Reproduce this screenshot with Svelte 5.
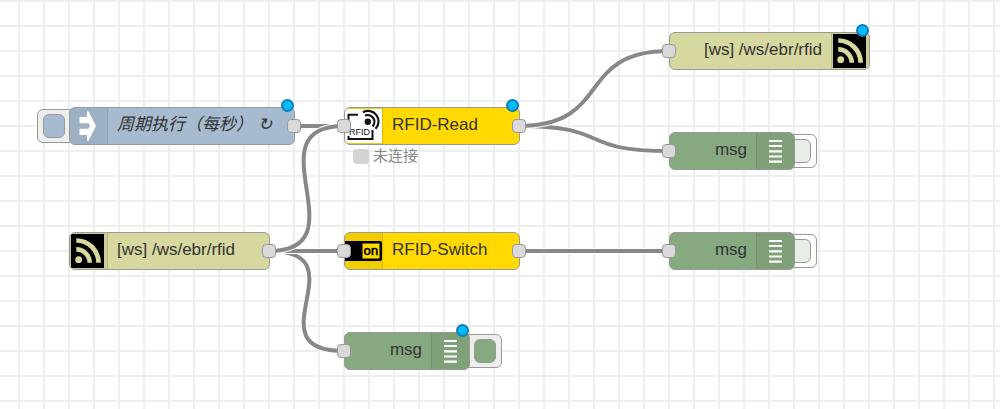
<script>
  const nodes = [
    { id: 'inject', type: 'inject', x: 69, y: 107, w: 226, label: '周期执行（每秒） ↻', icon: 'inject', out: true, changed: true, button: 'left' },
    { id: 'read', type: 'rfid', x: 344, y: 107, w: 176, label: 'RFID-Read', icon: 'tag', in: true, out: true, changed: true, status: '未连接' },
    { id: 'wsout', type: 'socket', x: 669, y: 32, w: 201, label: '[ws] /ws/ebr/rfid', icon: 'feed', end: true, in: true, changed: true },
    { id: 'debug1', type: 'debug', x: 669, y: 132, w: 126, label: 'msg', icon: 'list', end: true, in: true, button: 'off' },
    { id: 'wsin', type: 'socket', x: 69, y: 232, w: 201, label: '[ws] /ws/ebr/rfid', icon: 'feed', out: true },
    { id: 'switch', type: 'rfid', x: 344, y: 232, w: 176, label: 'RFID-Switch', icon: 'switch', in: true, out: true },
    { id: 'debug2', type: 'debug', x: 669, y: 232, w: 126, label: 'msg', icon: 'list', end: true, in: true, button: 'off' },
    { id: 'debug3', type: 'debug', x: 344, y: 332, w: 126, label: 'msg', icon: 'list', end: true, in: true, changed: true, button: 'on' }
  ];

  const links = [
    ['inject', 'read'],
    ['wsin', 'debug3'],
    ['wsin', 'switch'],
    ['wsin', 'read'],
    ['read', 'debug1'],
    ['read', 'wsout'],
    ['switch', 'debug2']
  ];

  const find = (id) => nodes.find((n) => n.id === id);

  function wire([from, to]) {
    const a = find(from);
    const b = find(to);
    const x1 = a.x + a.w - 1;
    const y1 = a.y + 19;
    const x2 = b.x;
    const y2 = b.y + 19;
    const bend = Math.round(Math.min(125, Math.hypot(x2 - x1, y2 - y1)) * 0.75);
    return `M${x1} ${y1}C${x1 + bend} ${y1} ${x2 - bend} ${y2} ${x2} ${y2}`;
  }
</script>

<main class="canvas">
  <svg class="wires" aria-hidden="true">
    {#each links as link}
      <path class="halo" d={wire(link)} />
      <path class="wire" d={wire(link)} />
    {/each}
  </svg>

  {#each nodes as node (node.id)}
    <section class="node {node.type}" style="left:{node.x}px;top:{node.y}px;width:{node.w}px">
      {#if node.button}
        <button class="action {node.button}" aria-label="{node.label} {node.button === 'left' ? 'inject' : 'toggle'}"><span></span></button>
      {/if}
      <div class="body" class:end={node.end}>
        <div class="icon">
          {#if node.icon === 'inject'}
            <svg width="37" height="36" viewBox="0 0 37 36">
              <path fill="#fff" d="M9.500 9h7.500V3.300h1.500L26 18l-7.500 14.700H17V27H9.500V20.700H18.500l1.500-2.700-1.500-2.700H9.500z" />
            </svg>
          {:else if node.icon === 'feed'}
            <svg width="37" height="36" viewBox="0 0 37 36">
              <path fill="#000" d="M1 1h33v34H1z" />
              <circle cx="8.700" cy="26.700" r="3.400" fill="#d8d8a0" />
              <path fill="none" stroke="#d8d8a0" stroke-width="4.700" d="M6.300 16.400a13.400 13.400 0 0 1 13.400 13.400M6.300 7.500a22.300 22.300 0 0 1 22.300 22.300" />
            </svg>
          {:else if node.icon === 'list'}
            <svg width="37" height="36" viewBox="0 0 37 36">
              <path fill="none" stroke="#fff" stroke-width="2.200" d="M12 8h13M12 13h13M12 18.300h13M12 23.500h13M12 28.700h13" />
            </svg>
          {:else if node.icon === 'tag'}
            <svg width="37" height="36" viewBox="0 0 37 36">
              <path fill="#fff" d="M0 1h37v34H0z" />
              <path fill="none" stroke="#111" stroke-width="2" d="M13 6.700H3.500V19M3.500 28v3h24V22" />
              <circle cx="22.800" cy="13.700" r="3.200" fill="#111" />
              <path fill="none" stroke="#111" stroke-width="2.200" d="M20 7.600a6.700 6.700 0 0 1 7.500 10.800M18 4.200a10.500 10.500 0 0 1 12.500 16.600" />
              <text x="4" y="27" class="tag-text">RFID</text>
            </svg>
          {:else}
            <svg width="37" height="36" viewBox="0 0 37 36">
              <rect x="-2" y="8" width="39" height="20" rx="2" fill="#000" />
              <path fill="#ffd900" d="M17.500 10.500h17v15h-17z" />
              <text x="18.500" y="22" class="on-text">on</text>
            </svg>
          {/if}
        </div>
        <span class="label">{node.label}</span>
      </div>
      {#if node.in}<i class="port in"></i>{/if}
      {#if node.out}<i class="port out"></i>{/if}
      {#if node.changed}<i class="changed"></i>{/if}
      {#if node.status}
        <div class="status"><i></i>{node.status}</div>
      {/if}
    </section>
  {/each}
</main>

<style>
  :global(body) {
    margin: 0;
  }
  .canvas {
    position: relative;
    min-height: 100vh;
    overflow: hidden;
    background-color: #fff;
    background-image: linear-gradient(#eee 2px, transparent 2px), linear-gradient(90deg, #eee 2px, transparent 2px);
    background-size: 25px 25px;
    background-position: 18px 0;
    font-family: 'Liberation Sans', 'Noto Sans CJK SC', sans-serif;
    color: #333;
  }
  .wires {
    position: absolute;
    inset: 0;
    width: 100%;
    height: 100%;
  }
  .halo,
  .wire {
    fill: none;
    stroke: #fff;
    stroke-width: 6px;
  }
  .wire {
    stroke: #888;
    stroke-width: 4px;
  }
  .node {
    position: absolute;
  }
  .body {
    position: relative;
    box-sizing: border-box;
    display: flex;
    align-items: center;
    gap: 9px;
    height: 38px;
    overflow: hidden;
    border: 1px solid #999;
    border-radius: 6px;
  }
  .end {
    flex-direction: row-reverse;
  }
  .inject .body {
    background: #a6bbcf;
  }
  .rfid .body {
    background: #ffd900;
  }
  .socket .body {
    background: #d7d7a0;
  }
  .debug .body {
    background: #87a980;
  }
  .icon {
    flex: none;
    width: 37px;
    height: 36px;
    background: rgba(0, 0, 0, 0.05);
    border-right: 1px solid rgba(0, 0, 0, 0.1);
  }
  .end .icon {
    border-right: 0;
    border-left: 1px solid rgba(0, 0, 0, 0.1);
  }
  .icon svg {
    display: block;
  }
  .tag-text {
    font-size: 9px;
    fill: #111;
  }
  .on-text {
    font-family: 'DejaVu Sans', sans-serif;
    font-size: 12px;
    fill: #000;
    stroke: #000;
    stroke-width: 0.6px;
  }
  .label {
    padding-bottom: 2px;
    font-size: 17px;
    line-height: 24px;
    white-space: nowrap;
  }
  .inject .label {
    font-style: italic;
  }
  .port {
    position: absolute;
    top: 12px;
    box-sizing: border-box;
    width: 14px;
    height: 14px;
    border: 1px solid #999;
    border-radius: 4px;
    background: #d9d9d9;
  }
  .in {
    left: -7px;
  }
  .out {
    right: -6px;
  }
  .changed {
    position: absolute;
    top: -8px;
    right: 1px;
    box-sizing: border-box;
    width: 13px;
    height: 13px;
    border: 2px solid #0f7fb4;
    border-radius: 50%;
    background: #00bcff;
  }
  .action {
    position: absolute;
    top: 2px;
    display: flex;
    align-items: center;
    box-sizing: border-box;
    width: 40px;
    height: 34px;
    padding: 0 5px;
    border: 1px solid #999;
    border-radius: 6px;
    background: #eee;
  }
  .action span {
    box-sizing: border-box;
    width: 22px;
    height: 24px;
    border: 1px solid #999;
    border-radius: 6px;
    background: #a6bbcf;
  }
  .left {
    left: -32px;
  }
  .on,
  .off {
    right: -32px;
    justify-content: flex-end;
  }
  .on span {
    background: #87a980;
  }
  .off {
    right: -22px;
    background: #fff;
  }
  .off span {
    background: #e7eee6;
  }
  .status {
    position: absolute;
    top: 39px;
    left: 9px;
    display: flex;
    align-items: center;
    gap: 4px;
    font-size: 15px;
    line-height: 20px;
    color: #888;
    white-space: nowrap;
  }
  .status i {
    width: 16px;
    height: 15px;
    border-radius: 4px;
    background: #d3d3d3;
  }
</style>
